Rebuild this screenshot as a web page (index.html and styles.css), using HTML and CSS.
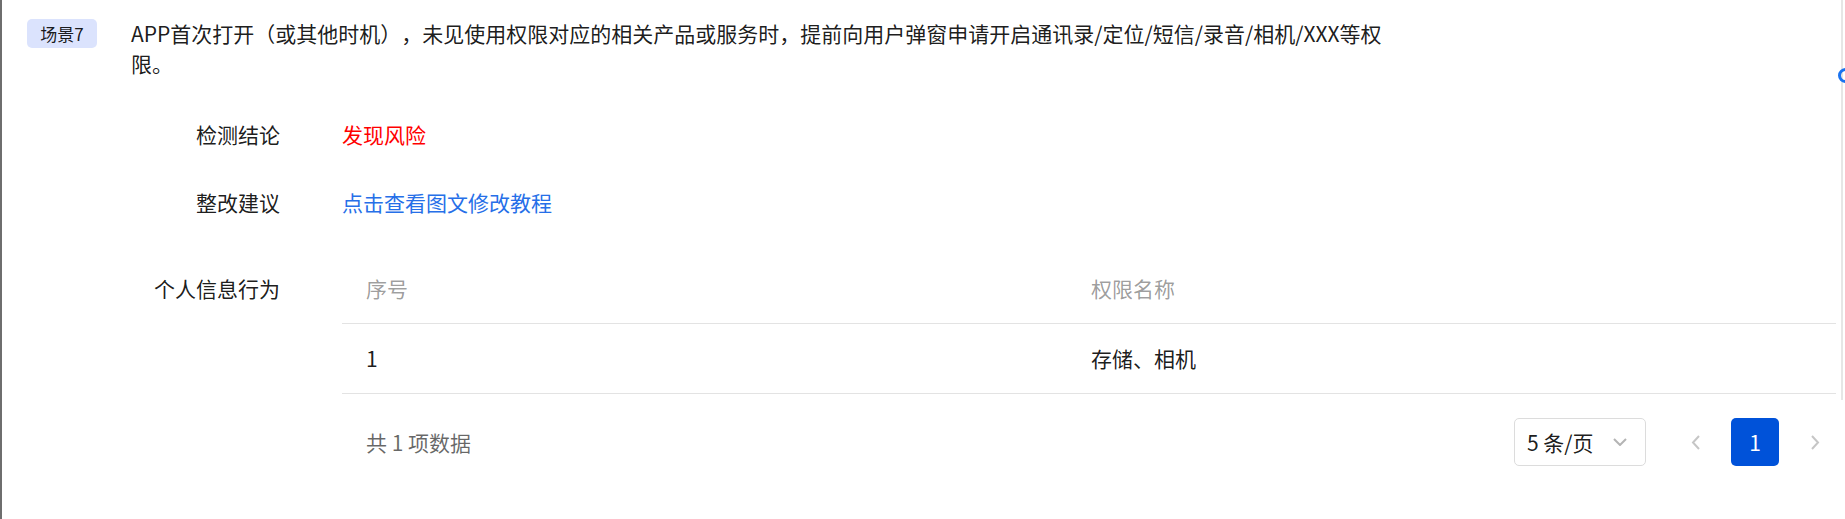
FILE: index.html
```html
<!DOCTYPE html>
<html lang="zh-CN">
  <head>
    <meta charset="UTF-8" />
    <meta name="viewport" content="width=device-width, initial-scale=1.0" />
    <title>检测详情 - 场景7</title>
    <link rel="stylesheet" href="styles.css">
  </head>
  <body>
    <div class="page">
      <!-- Scene header -->
      <div class="scene">
        <span class="tag">场景7</span>
        <p class="scene-desc">APP首次打开（或其他时机），未见使用权限对应的相关产品或服务时，提前向用户弹窗申请开启通讯录/定位/短信/录音/相机/XXX等权限。</p>
      </div>

      <!-- Detail rows -->
      <div class="detail">
        <div class="row">
          <div class="label">检测结论</div>
          <div class="value risk">发现风险</div>
        </div>
        <div class="row">
          <div class="label">整改建议</div>
          <div class="value"><a href="#" class="link">点击查看图文修改教程</a></div>
        </div>
        <div class="row">
          <div class="label label-table">个人信息行为</div>
          <div class="value">
            <table class="data-table">
              <tr>
                <th class="col-index">序号</th>
                <th>权限名称</th>
              </tr>
              <tr>
                <td>1</td>
                <td>存储、相机</td>
              </tr>
            </table>

            <!-- Pagination -->
            <div class="pagination">
              <div class="total">共 1 项数据</div>
              <div class="size-select">
                <span>5 条/页</span>
                <svg width="14" height="8" viewBox="0 0 14 8">
                  <path d="M1 1 L7 7 L13 1" fill="none" stroke="#b4b4b4" stroke-width="2" />
                </svg>
              </div>
              <div class="pages">
                <div class="page-btn">
                  <svg width="9" height="15" viewBox="0 0 9 15">
                    <path d="M8 1 L2 7.5 L8 14" fill="none" stroke="#c6c6c6" stroke-width="2" />
                  </svg>
                </div>
                <div class="page-btn current">1</div>
                <div class="page-btn">
                  <svg width="9" height="15" viewBox="0 0 9 15">
                    <path d="M1 1 L7 7.5 L1 14" fill="none" stroke="#c6c6c6" stroke-width="2" />
                  </svg>
                </div>
              </div>
            </div>
          </div>
        </div>
      </div>

      <div class="scroll-track"></div>
      <div class="drag-dot"></div>
    </div>
  </body>
</html>
```

FILE: styles.css
```css
/* General Page Styles */
body {
  margin: 0;
  font-family: "Noto Sans CJK SC", "Noto Sans", sans-serif;
  color: rgba(0, 0, 0, 0.9);
  background-color: #fff;
  text-spacing-trim: space-all;
}

.page {
  position: relative;
  min-height: 519px;
  box-sizing: border-box;
  border-left: 2px solid #6e6e6e;
  padding: 18px 9px 0 25px;
}

/* Scene header */
.scene {
  display: flex;
  align-items: flex-start;
  gap: 34px;
}

.tag {
  flex-shrink: 0;
  margin-top: 1px;
  width: 70px;
  height: 29px;
  line-height: 29px;
  text-align: center;
  font-size: 17px;
  background-color: #dbe3fd;
  border-radius: 5px;
}

.scene-desc {
  margin: 0;
  width: 1266px;
  font-size: 21px;
  line-height: 30px;
}

/* Detail rows */
.detail {
  margin-top: 40px;
  display: flex;
  flex-direction: column;
  gap: 35px;
  font-size: 21px;
  line-height: 33px;
}

.row {
  display: flex;
  gap: 62px;
}

.label {
  flex-shrink: 0;
  width: 253px;
  text-align: right;
}

.label-table {
  padding-top: 18px;
}

.value {
  flex: 1;
  min-width: 0;
}

.risk {
  color: #ff0000;
}

.link {
  color: #266fe8;
  text-decoration: none;
}

/* Table */
.data-table {
  width: 100%;
  border-collapse: collapse;
  table-layout: fixed;
}

.data-table th,
.data-table td {
  padding: 18px 24px;
  text-align: left;
  font-weight: normal;
  border-bottom: 1px solid #e3e3e3;
}

.data-table th {
  color: rgba(0, 0, 0, 0.4);
}

.col-index {
  width: 677px;
}

/* Pagination */
.pagination {
  display: flex;
  align-items: center;
  height: 48px;
  margin-top: 24px;
  margin-right: -3px;
  padding-left: 24px;
}

.total {
  flex: 1;
  color: rgba(0, 0, 0, 0.6);
}

.size-select {
  display: flex;
  align-items: center;
  justify-content: space-between;
  box-sizing: border-box;
  width: 132px;
  height: 48px;
  padding: 0 18px 0 12px;
  margin-right: 25px;
  border: 1px solid #dcdcdc;
  border-radius: 5px;
}

.pages {
  display: flex;
  gap: 12px;
}

.page-btn {
  display: flex;
  align-items: center;
  justify-content: center;
  width: 48px;
  height: 48px;
  border-radius: 5px;
}

.page-btn.current {
  background-color: #0052d9;
  color: #fff;
}

/* Right edge bits */
.scroll-track {
  position: absolute;
  top: 0;
  right: 2px;
  width: 2px;
  height: 400px;
  background-color: #e6e6e6;
}

.drag-dot {
  position: absolute;
  top: 68px;
  left: 1836px;
  width: 9px;
  height: 9px;
  border: 3px solid #1a73f0;
  border-radius: 50%;
}
```
